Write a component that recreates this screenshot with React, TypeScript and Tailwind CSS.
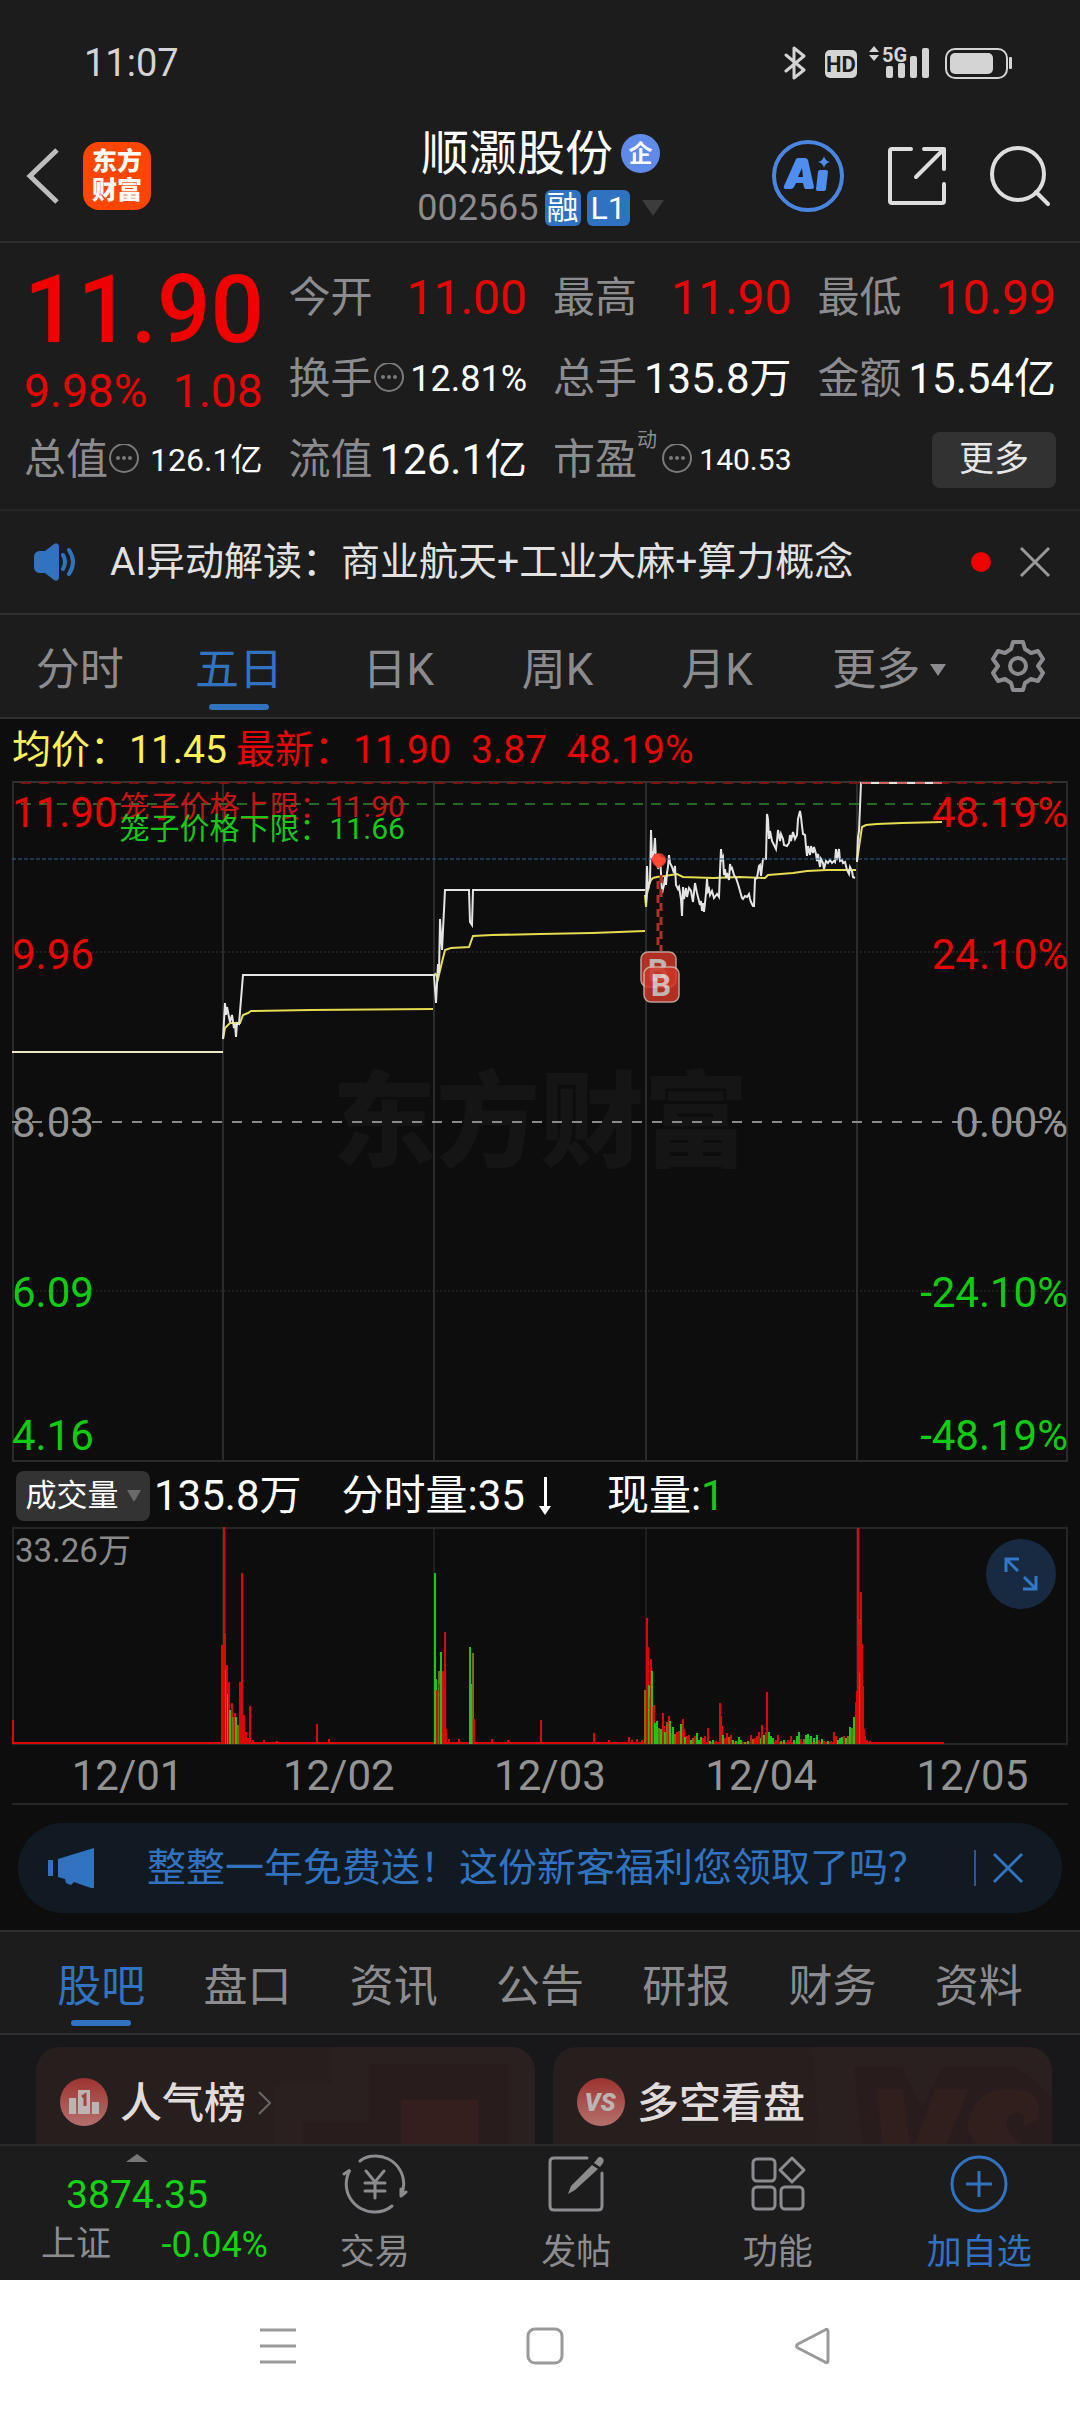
import { useState } from "react";

const periods = ["分时", "五日", "日K", "周K", "月K", "更多"];
const sections = ["股吧", "盘口", "资讯", "公告", "研报", "财务", "资料"];
const dates = ["12/01", "12/02", "12/03", "12/04", "12/05"];

const priceLines = [
  "M0 271H211",
  "M211 258L213 222L214 234L215 226L218 241L220 234L222 247L223 243L224 256L225 242L227 243L231 194H422L424 222L426 183L427 192L428 138L430 169L433 109H457L458 141L460 144L461 109H633",
  "M634 122L635 85L636 109L638 100L639 49L640 78L642 70L643 57L644 80L645 73L646 88L648 76L649 92L650 112L652 104L653 96L654 104L655 92L656 86L657 74L658 82L660 86L662 92L663 85L664 104L666 108L667 106L668 112L669 118L670 135L671 106L672 118L674 107L675 116L677 107L679 110L681 121L683 102L685 112L687 120L688 124L689 120L690 130L691 122L692 131L693 122L694 112L695 98L696 110L697 108L698 114L700 110L702 117L705 113L707 116L708 90L709 68L710 78L711 76L712 94L713 88L714 97L715 92L717 99L718 83L719 88L720 87L722 94L724 97L726 103L728 110L730 117L731 118L733 115L735 116L737 113L738 118L739 121L741 125L742 125L743 98L745 97L747 85L748 84L749 95L751 78L754 78L755 33L756 38L757 58L758 50L760 60L762 64L764 68L765 60L766 49L768 60L769 53L771 58L772 64L775 65L777 62L778 54L779 60L781 51L783 58L785 54L786 38L788 30L789 36L790 45L791 53L793 54L794 66L795 75L796 65L798 74L799 65L801 72L802 66L804 73L805 80L806 73L808 86L809 78L811 82L812 88L814 80L816 82L818 79L820 82L822 80L823 81L824 68L825 79L827 68L828 80L830 79L831 82L833 81L835 89L837 93L838 86L840 90L841 96L843 97",
  "M845 81L846 56L847 50L849 2H930",
];

const averageLines = [
  "M211 258L213 247L218 242H228L231 234L236 232L239 230L298 229L421 228",
  "M423 192L426 198L430 181L433 169L439 167L457 166L461 155L480 154L528 153L580 152L633 150",
  "M633 114L634 126L635 113L637 104L639 99L641 97L645 96L653 95L665 93L671 96L701 97L728 96L753 97L756 94L781 92L795 90L815 89L844 89",
  "M845 80L848 59L850 46L854 44L865 43L890 42L930 41",
];

// x, height, r = up / g = down / m = mixed
const volumes: [number, number, string][] = [
  [1, 24, "r"], [210, 99, "r"], [212, 217, "r"], [213, 111, "r"], [214, 74, "m"], [215, 79, "r"], [216, 50, "g"],
  [217, 62, "r"], [218, 34, "g"], [220, 41, "r"], [221, 27, "m"], [223, 31, "r"], [224, 27, "g"], [226, 19, "m"],
  [228, 62, "r"], [230, 171, "r"], [232, 29, "r"], [234, 12, "r"], [236, 6, "r"], [238, 38, "r"], [241, 4, "r"],
  [252, 4, "r"], [265, 3, "r"], [305, 20, "r"], [317, 5, "r"],
  [423, 171, "g"], [424, 65, "g"], [425, 54, "r"], [427, 73, "m"], [428, 60, "r"], [429, 92, "g"], [431, 73, "r"],
  [433, 112, "r"], [434, 15, "r"], [437, 5, "r"], [447, 5, "r"], [458, 97, "g"], [459, 60, "g"], [461, 91, "m"],
  [462, 25, "r"], [480, 5, "r"], [496, 4, "r"], [529, 24, "r"], [582, 11, "r"], [597, 4, "r"], [617, 7, "r"],
  [620, 4, "r"], [625, 5, "r"], [630, 4, "r"],
  [633, 54, "m"], [635, 126, "r"], [636, 97, "r"], [637, 59, "g"], [638, 46, "m"], [639, 85, "r"], [640, 73, "g"],
  [641, 37, "m"], [642, 39, "r"], [643, 21, "g"], [645, 23, "g"], [647, 16, "m"], [649, 15, "g"], [651, 31, "r"],
  [652, 18, "r"], [653, 12, "g"], [655, 22, "m"], [657, 28, "r"], [658, 23, "g"], [660, 11, "r"], [661, 17, "g"],
  [663, 10, "m"], [665, 12, "r"], [667, 13, "r"], [669, 20, "g"], [671, 25, "r"], [672, 15, "r"], [673, 7, "g"],
  [675, 8, "r"], [677, 9, "r"], [679, 4, "g"], [681, 6, "m"], [683, 8, "r"], [685, 11, "g"], [687, 4, "g"],
  [689, 7, "g"], [691, 6, "r"], [693, 8, "r"], [696, 16, "r"], [698, 3, "g"], [701, 4, "g"], [704, 3, "r"],
  [708, 41, "r"], [709, 28, "r"], [710, 18, "r"], [711, 9, "g"], [713, 6, "r"], [715, 11, "r"], [717, 7, "m"],
  [719, 9, "r"], [721, 4, "g"], [724, 3, "g"], [727, 7, "g"], [729, 4, "g"], [733, 2, "g"], [736, 3, "g"],
  [739, 9, "r"], [741, 5, "m"], [743, 6, "r"], [745, 8, "r"], [747, 12, "r"], [749, 6, "g"], [750, 19, "r"],
  [752, 9, "g"], [754, 12, "r"], [755, 52, "r"], [757, 12, "g"], [759, 8, "g"], [761, 6, "g"], [764, 4, "r"],
  [766, 9, "r"], [769, 3, "g"], [772, 4, "g"], [776, 4, "r"], [779, 8, "r"], [782, 4, "g"], [785, 8, "g"],
  [787, 12, "g"], [789, 5, "r"], [792, 5, "m"], [794, 9, "g"], [796, 10, "g"], [798, 5, "m"], [799, 8, "g"],
  [802, 6, "g"], [805, 9, "g"], [807, 4, "r"], [810, 5, "g"], [812, 3, "r"], [816, 3, "g"], [819, 3, "r"],
  [822, 12, "r"], [824, 8, "r"], [826, 4, "g"], [828, 6, "g"], [830, 7, "g"], [832, 8, "r"], [834, 6, "g"],
  [836, 8, "m"], [838, 17, "g"], [840, 16, "m"], [842, 27, "g"], [844, 42, "r"], [845, 53, "r"], [846, 216, "r"],
  [847, 125, "r"], [848, 71, "m"], [849, 152, "r"], [850, 100, "r"], [851, 58, "r"], [852, 15, "r"], [853, 8, "r"],
  [855, 4, "r"], [858, 3, "r"],
];

const barColors: Record<string, string> = {
  r: "#dc0808",
  g: "#18c818",
  m: "#7d6a12",
};

const Dots = () => (
  <svg className="size-8 shrink-0" viewBox="0 0 32 32" fill="#7a7a7d">
    <circle cx="16" cy="14" r="14" fill="none" stroke="#7a7a7d" strokeWidth="2" />
    <circle cx="10" cy="14" r="2" />
    <circle cx="16" cy="14" r="2" />
    <circle cx="22" cy="14" r="2" />
  </svg>
);

const Cross = () => (
  <svg className="size-8" viewBox="0 0 32 32" fill="none" stroke="currentColor" strokeWidth="3">
    <path d="M2 2l28 28M30 2L2 30" />
  </svg>
);

const StatusBar = () => (
  <div className="flex h-[110px] items-center justify-between pt-4 pr-[66px] pl-[84px] text-[38px] leading-none text-[#d4d4d4]">
    <span>11:07</span>
    <svg className="h-11 w-[230px]" viewBox="0 -4 230 44" fill="#d4d4d4">
      <path
        d="M2 10l18 15-10 8V3l10 8L2 26"
        fill="none"
        stroke="#d4d4d4"
        strokeWidth="3"
        strokeLinejoin="round"
        strokeLinecap="round"
      />
      <rect x="41" y="5" width="32" height="28" rx="5" />
      <text x="57" y="27" textAnchor="middle" fontSize="22" fontWeight="700" fill="#1c1c1c">
        HD
      </text>
      <path d="M90 1l5 6H85zM90 16l5-6H85z" />
      <text x="98" y="17" fontSize="20" fontWeight="700">
        5G
      </text>
      <rect x="102" y="21" width="7" height="12" rx="2" />
      <rect x="114" y="18" width="7" height="15" rx="2" />
      <rect x="126" y="11" width="7" height="22" rx="2" />
      <rect x="138" y="3" width="7" height="30" rx="2" />
      <rect x="162" y="4" width="61" height="29" rx="9" fill="none" stroke="#d4d4d4" strokeWidth="2" />
      <rect x="166" y="8" width="43" height="21" rx="5" />
      <rect x="225" y="12" width="3" height="12" rx="1" />
    </svg>
  </div>
);

const Header = () => (
  <header className="grid h-[133px] grid-cols-[1fr_auto_1fr] items-center border-b-2 border-[#2e2e2e] pr-[29px] pl-[26px]">
    <div className="flex items-center gap-[23px]">
      <button aria-label="返回">
        <svg className="h-14 w-[34px]" viewBox="0 0 34 56" fill="none" stroke="#bdbdbd" strokeWidth="5">
          <path d="M31 2L4 28l27 26" />
        </svg>
      </button>
      <div className="flex size-[68px] flex-col items-center justify-center rounded-2xl bg-[#ff4600] text-[25px] leading-[29px] font-black text-white">
        <span>东方</span>
        <span>财富</span>
      </div>
    </div>
    <div className="flex flex-col items-center pt-1 pl-1">
      <h1 className="flex items-center gap-2 text-[48px] leading-[60px] text-white">
        顺灏股份
        <span className="flex size-[39px] items-center justify-center rounded-full bg-[#5f8ae8] text-[24px] font-bold">
          企
        </span>
      </h1>
      <button className="flex items-center gap-1.5 text-[36px] leading-[48px] text-[#8c8c90]">
        002565
        <span className="h-9 rounded-md bg-[#2f72c0] px-0.5 text-[32px] leading-9 text-white">融</span>
        <span className="h-9 rounded-md bg-[#2f72c0] px-1 text-[32px] leading-9 text-white">L1</span>
        <svg className="ml-1.5 h-4 w-[22px]" viewBox="0 0 22 16" fill="#3c3c3c">
          <path d="M0 0h22L11 16z" />
        </svg>
      </button>
    </div>
    <div className="flex items-center justify-end gap-[42px]">
      <button aria-label="AI">
        <svg className="size-[74px]" viewBox="0 0 74 74" fill="#4f8df0">
          <circle cx="37" cy="37" r="34" fill="none" stroke="#4a86e0" strokeWidth="4" />
          <path
            fillRule="evenodd"
            d="M25 20q1-1 2-1h7q2 0 3 2l6 27q0 2-2 2h-6q-2 0-2-2l-1-4h-7l-2 4q-1 2-3 2h-5q-3 0-2-3zM31 29l-4 9h5z"
          />
          <path d="M49 31h6q2 0 2 2l-2 17q0 2-2 2h-6q-2 0-2-2l2-17q0-2 2-2zM53 17q1 5 6 6-5 1-6 6-1-5-6-6 5-1 6-6z" />
        </svg>
      </button>
      <button aria-label="分享">
        <svg
          className="size-[60px]"
          viewBox="0 0 60 60"
          fill="none"
          stroke="#dedede"
          strokeWidth="4"
          strokeLinecap="round"
          strokeLinejoin="round"
        >
          <path d="M24 3H5q-2 0-2 2v50q0 2 2 2h50q2 0 2-2V38M37 3h20v20M57 3L29 31" />
        </svg>
      </button>
      <button aria-label="搜索">
        <svg className="size-[62px]" viewBox="0 0 62 62" fill="none" stroke="#dedede" strokeWidth="4" strokeLinecap="round">
          <circle cx="29" cy="29" r="26" />
          <path d="M47 47l12 12" />
        </svg>
      </button>
    </div>
  </header>
);

type QuoteProps = { label: string; value: string; red?: boolean; dots?: boolean; size?: string };

const Quote = ({ label, value, red, dots, size = "text-[42px]" }: QuoteProps) => (
  <div className="flex items-center justify-between whitespace-nowrap">
    <dt className="flex items-center text-[#8c8c90]">
      {label}
      {dots && <Dots />}
    </dt>
    <dd className={red ? "text-[48px] text-[#e60606]" : `${size} text-white`}>{value}</dd>
  </div>
);

const QuotePanel = () => (
  <section className="border-b-2 border-[#262626] px-6 pt-[14px] pb-[9px]">
    <dl className="grid auto-rows-[81px] grid-cols-4 gap-x-[26px] text-[42px] leading-[60px]">
      <div className="row-span-2 flex flex-col text-[46px] text-[#e60606]">
        <dd className="pt-2 text-center text-[94px] leading-[90px] font-medium text-[#f00000]">11.90</dd>
        <dd className="flex justify-between pt-1.5">
          <span>9.98%</span>
          <span>1.08</span>
        </dd>
      </div>
      <Quote label="今开" value="11.00" red />
      <Quote label="最高" value="11.90" red />
      <Quote label="最低" value="10.99" red />
      <Quote label="换手" value="12.81%" dots size="text-[36px]" />
      <Quote label="总手" value="135.8万" />
      <Quote label="金额" value="15.54亿" />
      <Quote label="总值" value="126.1亿" dots size="text-[32px]" />
      <Quote label="流值" value="126.1亿" />
      <div className="flex items-center justify-between">
        <dt className="flex items-center text-[#8c8c90]">
          市盈<sup className="-mr-5 self-start text-[20px] leading-[40px]">动</sup>
          <span className="ml-6">
            <Dots />
          </span>
        </dt>
        <dd className="text-[30px] text-white">140.53</dd>
      </div>
      <div className="flex items-center justify-end">
        <button className="h-14 w-[124px] rounded-lg bg-[#323232] text-[35px] leading-[54px] text-[#e6e6e6]">更多</button>
      </div>
    </dl>
  </section>
);

const NewsBar = () => (
  <section className="flex h-[104px] items-center border-b-2 border-[#303030] pr-[29px] pl-[34px]">
    <svg className="mr-8 h-[38px] w-11" viewBox="0 0 44 38" fill="#3273c0">
      <path d="M5 8h6L20 1q4-2 5 2v32q-1 4-5 2L11 30H5q-5-1-5-6V14q0-5 5-6z" />
      <path d="M29 12q4 7 0 14M35 7q8 12 0 24" fill="none" stroke="#3273c0" strokeWidth="4" strokeLinecap="round" />
    </svg>
    <a href="#news" className="flex-1 text-[39px] leading-[60px] text-[#e2e2e2]">
      AI异动解读：商业航天+工业大麻+算力概念
    </a>
    <span className="mr-7 size-5 rounded-full bg-[#f00000]" />
    <button aria-label="关闭" className="text-[#9a9a9a]">
      <Cross />
    </button>
  </section>
);

const PeriodTabs = () => {
  const [active, setActive] = useState("五日");

  return (
    <nav className="flex h-[104px] items-stretch border-b-2 border-[#303030] text-[44px] leading-[60px] text-[#8c8c90]">
      {periods.map((p) => (
        <button
          key={p}
          onClick={() => setActive(p)}
          className={`flex flex-1 flex-col items-center justify-end ${active === p ? "text-[#3273c0]" : ""}`}
        >
          <span className="flex items-center">
            {p}
            {p === "更多" && (
              <svg className="-mr-[26px] ml-2.5 h-3 w-4" viewBox="0 0 16 12" fill="#8c8c90">
                <path d="M0 0h16L8 12z" />
              </svg>
            )}
          </span>
          <span className={`mt-1 mb-[7px] h-1.5 w-[60px] rounded-full ${active === p ? "bg-[#3273c0]" : ""}`} />
        </button>
      ))}
      <button aria-label="设置" className="flex w-[124px] items-center justify-center">
        <svg className="size-[54px]" viewBox="0 0 54 54" fill="none" stroke="#8c8c90" strokeWidth="4" strokeLinejoin="round">
          <path d="M22 3h10l2 7 6 4 7-2 5 8-5 7 5 7-5 8-7-2-6 4-2 7H22l-2-7-6-4-7 2-5-8 5-7-5-7 5-8 7 2 6-4z" />
          <circle cx="27" cy="27" r="8" />
        </svg>
      </button>
    </nav>
  );
};

const PriceChart = () => (
  <section className="px-3">
    <p className="flex h-[62px] items-center text-[39px] leading-[60px] whitespace-pre text-[#e60606]">
      <span className="text-[#fff05a]">均价：11.45</span>
      <span className="ml-[9px]">最新：11.90</span>
      <span className="ml-5">3.87</span>
      <span className="ml-5">48.19%</span>
    </p>
    <div className="relative text-[42px] leading-[50px]">
      <p className="absolute inset-x-0 top-[278px] text-center text-[104px] leading-[130px] font-black text-[#151515]">
        东方财富
      </p>
      <svg className="relative block h-[681px] w-full" viewBox="0 0 1056 681" preserveAspectRatio="none" fill="none">
        <path d="M0 1H1056" stroke="#333" strokeWidth="2" />
        <path d="M1 0V680M1055 0V680M0 680H1056" stroke="#2b2b2b" strokeWidth="2" />
        <path d="M211 2V680M422 2V680M634 2V680M845 2V680" stroke="#2b2b2b" strokeWidth="2" />
        <path d="M0 171H1056M0 510H1056" stroke="#333" strokeDasharray="2 2" />
        <path d="M9 2H1040" stroke="#7c1212" strokeWidth="2" strokeDasharray="10 8" />
        <path d="M9 23H1040" stroke="#28682a" strokeWidth="2" strokeDasharray="10 8" />
        <path d="M0 341H1056" stroke="#8a8a8a" strokeWidth="2" strokeDasharray="10 10" />
        {averageLines.map((d) => (
          <path key={d} d={d} stroke="#e6dc50" strokeWidth="2" />
        ))}
        {priceLines.map((d, i) => (
          <path key={d} d={d} stroke={i === 0 ? "#ece8c8" : "#e4e4e4"} strokeWidth="2" />
        ))}
        <path d="M849 2H930" stroke="#d06464" strokeWidth="2" strokeDasharray="10 8" />
        <path d="M0 78H1056" stroke="#2f6299" strokeDasharray="4 2" />
        <circle cx="647" cy="79" r="7" fill="#c0362a" />
        <path d="M646 88l-6-9q0-6 5-6 3 0 4 3 5 0 5 4z" fill="#ff4a36" />
        <path d="M646 100V170" stroke="#b03226" strokeWidth="3" strokeDasharray="8 6" />
        <path d="M649 94V170" stroke="#b03226" strokeWidth="3" strokeDasharray="8 6" />
        {[
          [629, 171],
          [632, 186],
        ].map(([x, y]) => (
          <g key={x} opacity="0.85">
            <rect x={x} y={y} width="35" height="35" rx="7" fill="#cc3626" stroke="#dcb6b0" strokeWidth="1.5" />
            <text x={x + 17} y={y + 29} textAnchor="middle" fontSize="32" fontWeight="700" fill="#e0d0ce">
              B
            </text>
          </g>
        ))}
      </svg>
      <div className="absolute top-[7px] left-0 flex text-[#e60606]">
        11.90
        <div className="flex flex-col pt-2 pl-0.5 text-[30px] leading-[22px] text-[#c41414]">
          <span>笼子价格上限：11.90</span>
          <span className="text-[#18c818]">笼子价格下限：11.66</span>
        </div>
      </div>
      <div className="absolute top-[149px] left-0 text-[#e60606]">9.96</div>
      <div className="absolute top-[317px] left-0 text-[#939393]">8.03</div>
      <div className="absolute top-[487px] left-0 text-[#10cc10]">6.09</div>
      <div className="absolute top-[630px] left-0 text-[#10cc10]">4.16</div>
      <div className="absolute top-[7px] right-0 text-[#e60606]">48.19%</div>
      <div className="absolute top-[149px] right-0 text-[#e60606]">24.10%</div>
      <div className="absolute top-[317px] right-0 text-[#939393]">0.00%</div>
      <div className="absolute top-[487px] right-0 text-[#10cc10]">-24.10%</div>
      <div className="absolute top-[630px] right-0 text-[#10cc10]">-48.19%</div>
    </div>
  </section>
);

const VolumeChart = () => (
  <section className="px-3">
    <div className="flex h-[65px] items-center pt-0.5 pl-1 text-[42px] leading-[60px] text-white">
      <button className="mr-1 flex h-[50px] w-[134px] items-center justify-center gap-2 rounded-lg bg-[#333] text-[31px]">
        成交量
        <svg className="h-3 w-3.5" viewBox="0 0 14 12" fill="#6a6a6a">
          <path d="M0 0h14L7 12z" />
        </svg>
      </button>
      <span>135.8万</span>
      <span className="ml-10">分时量:35</span>
      <svg className="ml-3.5 h-[38px] w-3" viewBox="0 0 12 38" fill="#fff">
        <path d="M5 0h3v29h4L6 38 0 29h5z" />
      </svg>
      <span className="ml-14">
        现量:<span className="text-[#18c818]">1</span>
      </span>
    </div>
    <div className="relative">
      <svg className="block h-[218px] w-full" viewBox="0 0 1056 218" preserveAspectRatio="none" fill="none">
        <path d="M1 1H1055V217H1z" stroke="#262626" strokeWidth="2" />
        <path d="M211 0V217M422 0V217M634 0V217M845 0V217" stroke="#333" strokeWidth="1" />
        <path d="M0 216H932" stroke="#dc0808" strokeWidth="2" />
        {volumes.map(([x, h, c]) => (
          <rect key={x} x={x - 1} y={217 - h} width="2" height={h} fill={barColors[c]} />
        ))}
      </svg>
      <span className="absolute top-0.5 left-[3px] text-[33px] leading-[44px] text-[#8a8a8a]">33.26万</span>
      <button
        aria-label="全屏"
        className="absolute top-3 right-3 flex size-[70px] items-center justify-center rounded-full bg-[#172a41]"
      >
        <svg className="size-[34px]" viewBox="0 0 34 34" fill="none" stroke="#3278c8" strokeWidth="3">
          <path d="M2 15V2h13M2 2l12 12M32 19v13H19M32 32L20 20" />
        </svg>
      </button>
    </div>
    <div className="grid h-[60px] grid-cols-5 border-b-2 border-[#242424] text-center text-[42px] leading-[62px] text-[#939393]">
      {dates.map((d) => (
        <span key={d} className="pl-5">
          {d}
        </span>
      ))}
    </div>
  </section>
);

const Banner = () => (
  <section className="mx-[18px] mt-[18px] mb-[17px] flex h-[90px] items-center rounded-full bg-[#111a23] pr-[38px] pl-[30px] text-[#3273c0]">
    <svg className="mr-[53px] h-10 w-[46px]" viewBox="0 0 46 40" fill="currentColor">
      <path d="M46 0v40h-3l-17-6-3 3-5-2-1-4-7-2V11zM0 12h5v16H0z" />
    </svg>
    <a href="#gift" className="flex-1 text-[39px] leading-[60px] whitespace-nowrap">
      整整一年免费送！这份新客福利您领取了吗？
    </a>
    <span className="mr-4 h-9 w-0.5 bg-[#28589a]" />
    <button aria-label="关闭">
      <Cross />
    </button>
  </section>
);

const SectionTabs = () => {
  const [active, setActive] = useState("股吧");

  return (
    <nav className="flex h-[105px] border-y-2 border-[#303030] bg-[#1c1c1c] px-7 text-[44px] leading-[60px] text-[#8c8c90]">
      {sections.map((s) => (
        <button
          key={s}
          onClick={() => setActive(s)}
          className={`flex flex-1 flex-col items-center justify-end ${active === s ? "text-[#3273c0]" : ""}`}
        >
          {s}
          <span className={`mt-[3px] mb-[7px] h-1.5 w-[60px] rounded-full ${active === s ? "bg-[#3273c0]" : ""}`} />
        </button>
      ))}
    </nav>
  );
};

const Cards = () => (
  <section className="grid h-[109px] grid-cols-2 gap-[18px] overflow-hidden bg-[#18181a] pt-3 pr-7 pl-9 text-[42px] leading-[60px] font-medium text-[#e0dcdc]">
    <a href="#rank" className="relative flex h-[140px] items-start overflow-hidden rounded-3xl bg-[#271e1e] pt-[25px] pl-6">
      <svg className="absolute top-0 right-0 h-[140px] w-[260px]" viewBox="0 0 260 140">
        <path d="M57 0H260V140H0V38H57z" fill="#2a201f" />
        <path d="M94 17H233V140H28V75H94z" fill="#281c1c" />
        <rect x="126" y="53" width="77" height="90" fill="#351f1e" />
      </svg>
      <svg className="relative mt-1.5 mr-3 size-12" viewBox="0 0 48 48">
        <defs>
          <linearGradient id="badge" x1="0" y1="0" x2="0" y2="1">
            <stop offset="0" stopColor="#9c3430" />
            <stop offset="1" stopColor="#b4706c" />
          </linearGradient>
        </defs>
        <circle cx="24" cy="24" r="24" fill="url(#badge)" />
        <path d="M9 20h7v16H9zM18 12h12v24H18zM32 24h7v12h-7z" fill="#bcb4b2" />
        <path d="M22 19l3-2v11" fill="none" stroke="#a04440" strokeWidth="3" />
      </svg>
      <span className="relative mt-0.5">人气榜</span>
      <svg className="relative mt-[19px] ml-3 h-6 w-3.5" viewBox="0 0 14 24" fill="none" stroke="#6c6666" strokeWidth="2">
        <path d="M1 1l11 11L1 23" />
      </svg>
    </a>
    <a href="#debate" className="relative flex h-[140px] items-start overflow-hidden rounded-3xl bg-[#271e1e] pt-[25px] pl-6">
      <svg className="absolute top-0 right-0 h-[140px] w-[260px]" viewBox="0 0 260 140">
        <path d="M20 0H260V140H32z" fill="#2a201f" />
        <path d="M62 20H110L130 60 150 20H225L260 50V140H75z" fill="#281c1c" />
        <path
          d="M84 42h27l8 66 24-66h34L138 140H96zM176 140q0-20 14-38-20-14-12-34 8-26 40-26 34 0 28 30l-14 8q2-14-8-14-10 1-10 12 2 8 16 20 12 10 12 22z"
          fill="#311f1e"
        />
      </svg>
      <svg className="relative mt-1.5 mr-3 size-12" viewBox="0 0 48 48">
        <circle cx="24" cy="24" r="24" fill="url(#badge)" />
        <text x="23" y="33" textAnchor="middle" fontSize="25" fontWeight="900" fontStyle="italic" fill="#bcb4b2">
          VS
        </text>
      </svg>
      <span className="relative mt-0.5">多空看盘</span>
    </a>
  </section>
);

const BottomNav = () => (
  <nav className="flex h-[136px] border-t-2 border-[#272727] text-[35px] leading-[50px] text-[#8c8c90]">
    <button className="flex w-[274px] flex-col items-center pt-2">
      <svg className="h-2 w-[22px]" viewBox="0 0 22 8" fill="#77777a">
        <path d="M0 8h22L11 0z" />
      </svg>
      <span className="pt-2 text-[39px] text-[#14d214]">3874.35</span>
      <span className="flex w-full justify-between pr-1.5 pl-[41px]">
        上证<span className="text-[36px] text-[#14d214]">-0.04%</span>
      </span>
    </button>
    <button className="flex flex-1 flex-col items-center pt-2">
      <svg
        className="mb-3.5 h-[60px] w-[66px]"
        viewBox="0 0 66 60"
        fill="none"
        stroke="#8c8c90"
        strokeWidth="3"
        strokeLinecap="round"
      >
        <path d="M18 7Q24 2 33 2A28 28 0 0 1 59 42L64 38M50 52Q43 58 33 58A28 28 0 0 1 8 16L2 20M59 42V35" />
        <path d="M24 17l9 11 9-11M33 28v16M23 29h20M23 37h20" />
      </svg>
      交易
    </button>
    <button className="flex flex-1 flex-col items-center pt-2">
      <svg className="mb-3.5 size-[60px]" viewBox="0 0 60 60" fill="none" stroke="#8c8c90" strokeWidth="3">
        <path d="M41 4H8q-4 0-4 4v44q0 4 4 4h44q4 0 4-4V19" strokeLinecap="round" />
        <path d="M55 3q4 2 2 6l-3 4-6-4 3-4q2-3 4-2zM46 11l6 4-23 21-7 4 3-8z" fill="#8c8c90" stroke="none" />
      </svg>
      发帖
    </button>
    <button className="flex flex-1 flex-col items-center pt-2">
      <svg className="mb-3.5 size-[60px]" viewBox="0 0 60 60" fill="none" stroke="#8c8c90" strokeWidth="3">
        <rect x="5" y="5" width="22" height="22" rx="4" />
        <rect x="5" y="33" width="22" height="22" rx="4" />
        <rect x="33" y="33" width="22" height="22" rx="4" />
        <path d="M44 4l12 12-12 12-12-12z" strokeLinejoin="round" />
      </svg>
      功能
    </button>
    <button className="flex flex-1 flex-col items-center pt-2 text-[#3273c0]">
      <svg className="mb-3.5 size-[60px]" viewBox="0 0 60 60" fill="none" stroke="#3273c0" strokeWidth="3">
        <circle cx="30" cy="30" r="27" />
        <path d="M30 17v26M17 30h26" />
      </svg>
      加自选
    </button>
  </nav>
);

const SystemNav = () => (
  <div className="grid h-[132px] grid-cols-3 place-items-center bg-white pr-[135px] pl-[144px] text-[#9a9a9a]">
    <button aria-label="菜单">
      <svg className="size-[38px]" viewBox="0 0 38 38" stroke="currentColor" strokeWidth="3">
        <path d="M1 3h36M1 19h36M1 35h36" />
      </svg>
    </button>
    <button aria-label="主页">
      <svg className="size-[38px]" viewBox="0 0 38 38" fill="none" stroke="currentColor" strokeWidth="3">
        <rect x="2" y="2" width="34" height="34" rx="7" />
      </svg>
    </button>
    <button aria-label="后退">
      <svg className="size-[38px]" viewBox="0 0 38 38" fill="none" stroke="currentColor" strokeWidth="3" strokeLinejoin="round">
        <path d="M32 3q3-2 3 2v28q0 4-3 2L5 21q-3-2 0-4z" />
      </svg>
    </button>
  </div>
);

export default function App() {
  return (
    <div className="min-h-screen bg-[#0d0d0d] font-[Roboto,'Noto_Sans_CJK_SC',sans-serif]">
      <div className="bg-[#1c1c1c]">
        <StatusBar />
        <Header />
        <QuotePanel />
        <NewsBar />
        <PeriodTabs />
      </div>
      <PriceChart />
      <VolumeChart />
      <Banner />
      <SectionTabs />
      <Cards />
      <div className="bg-[#1c1c1c]">
        <BottomNav />
      </div>
      <SystemNav />
    </div>
  );
}
